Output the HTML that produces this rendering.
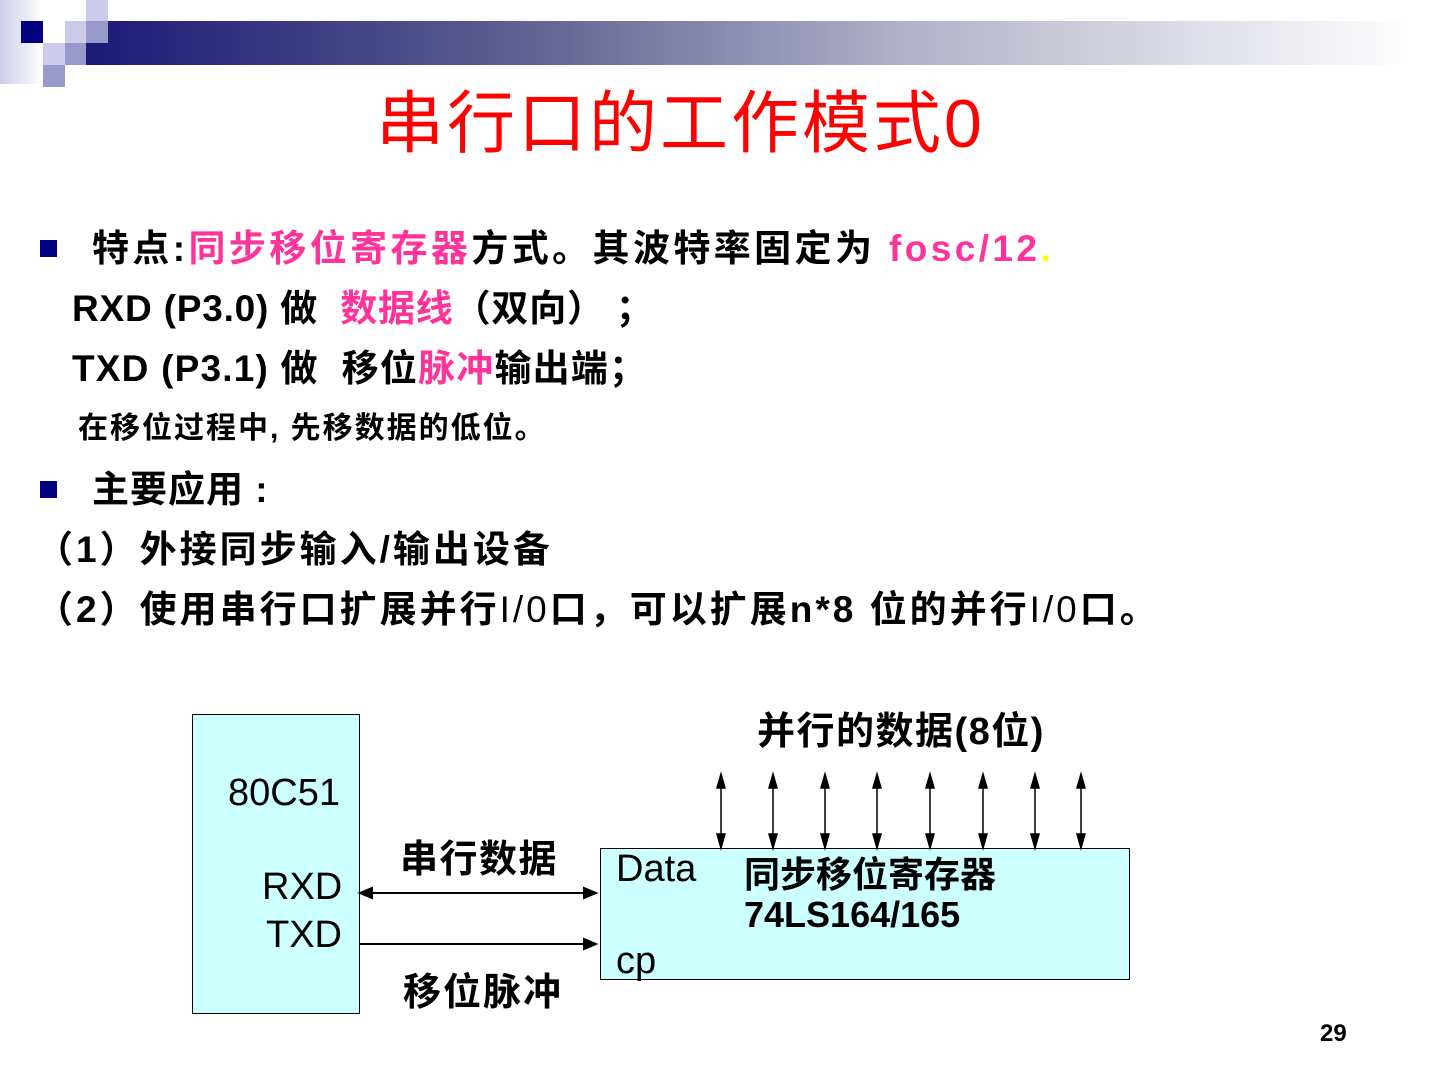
<!DOCTYPE html>
<html><head><meta charset="utf-8"><style>
body{margin:0;width:1440px;height:1080px;background:#fff;position:relative;overflow:hidden;font-family:"Liberation Sans","Noto Sans CJK SC",sans-serif}
.a{position:absolute;white-space:pre}
.b{font-weight:bold;color:#000}
.p{color:#ff3399}
.sq{position:absolute;width:22px;height:22px}
</style></head><body>
<div class="a" style="left:0;top:0;width:42px;height:84px;background:linear-gradient(90deg,#ccccea,#fff)"></div>
<div class="sq" style="left:21px;top:21px;background:#000080"></div>
<div class="sq" style="left:65px;top:21px;background:#ccccea"></div>
<div class="sq" style="left:86px;top:0;background:#ccccea"></div>
<div class="sq" style="left:43px;top:43px;background:#ccccea"></div>
<div class="sq" style="left:65px;top:43px;background:#9999cc"></div>
<div class="sq" style="left:43px;top:65px;background:#9999cc"></div>
<div class="a" style="left:86px;top:21px;width:1354px;height:44px;background:linear-gradient(90deg,#1a1a78,#5a5a8e 30%,#b0b0c8 60%,#fff 98%)"></div>
<div class="sq" style="left:86px;top:21px;background:#9999cc"></div>

<div class="a" style="left:376px;top:82px;font-size:68px;color:#ff0000;line-height:84px;letter-spacing:3px">串行口的工作模式0</div>

<div class="a" style="left:40px;top:240px;width:17px;height:17px;background:#000080"></div>
<div class="a b" style="left:92px;top:226px;font-size:37px;line-height:46px;letter-spacing:3.4px">特点:<span class="p">同步移位寄存器</span>方式。其波特率固定为 <span class="p">fosc/12</span><span style="color:#ff0">.</span></div>
<div class="a b" style="left:72px;top:286px;font-size:37px;line-height:46px;letter-spacing:0.8px">RXD (P3.0) 做  <span class="p">数据线</span>（双向） ；</div>
<div class="a b" style="left:72px;top:346px;font-size:37px;line-height:46px;letter-spacing:1.2px">TXD (P3.1) 做  移位<span class="p">脉冲</span>输出端；</div>
<div class="a b" style="left:78px;top:410px;font-size:30px;line-height:38px;letter-spacing:2px">在移位过程中, 先移数据的低位。</div>
<div class="a" style="left:40px;top:481px;width:17px;height:17px;background:#000080"></div>
<div class="a b" style="left:92px;top:467px;font-size:37px;line-height:46px;letter-spacing:1px">主要应用 :</div>
<div class="a b" style="left:36px;top:527px;font-size:37px;line-height:46px;letter-spacing:3px">（1）外接同步输入/输出设备</div>
<div class="a b" style="left:36px;top:587px;font-size:37px;line-height:46px;letter-spacing:3px">（2）使用串行口扩展并行<span style="font-weight:normal">I/0</span>口，可以扩展n*8 位的并行<span style="font-weight:normal">I/0</span>口。</div>

<div class="a" style="left:192px;top:714px;width:166px;height:298px;background:#ccffff;border:1.5px solid #000"></div>
<div class="a" style="left:228px;top:772px;font-size:38px">80C51</div>
<div class="a" style="left:262px;top:866px;font-size:38px">RXD</div>
<div class="a" style="left:266px;top:914px;font-size:38px">TXD</div>
<div class="a" style="left:600px;top:848px;width:528px;height:130px;background:#ccffff;border:1.5px solid #000"></div>
<div class="a" style="left:616px;top:848px;font-size:38px">Data</div>
<div class="a b" style="left:744px;top:846px;font-size:36px">同步移位寄存器</div>
<div class="a b" style="left:744px;top:894px;font-size:36px">74LS164/165</div>
<div class="a" style="left:616px;top:940px;font-size:38px">cp</div>
<div class="a b" style="left:400px;top:828px;font-size:38px;letter-spacing:1.5px">串行数据</div>
<div class="a b" style="left:403px;top:961px;font-size:38px;letter-spacing:2px">移位脉冲</div>
<div class="a b" style="left:757px;top:700px;font-size:38px;letter-spacing:1.5px">并行的数据(8位)</div>
<svg class="a" style="left:0;top:0" width="1440" height="1080">
<g stroke="#000" stroke-width="2" fill="#000">
<line x1="366" y1="893" x2="590" y2="893"/><polygon points="360,893 372,888 372,898"/><polygon points="596,893 584,888 584,898"/>
<line x1="360" y1="944" x2="590" y2="944"/><polygon points="596,944 584,939 584,949"/>
</g>
<g stroke="#000" stroke-width="1.5" fill="#000">
<g id="ar"><line x1="721" y1="780" x2="721" y2="842"/><polygon points="721,774 717,788 725,788"/><polygon points="721,848 717,834 725,834"/></g>
<use href="#ar" x="52"/><use href="#ar" x="104"/><use href="#ar" x="156"/><use href="#ar" x="209"/><use href="#ar" x="262"/><use href="#ar" x="314"/><use href="#ar" x="360"/>
</g>
</svg>
<div class="a b" style="left:1320px;top:1020px;font-size:24px">29</div>
</body></html>
